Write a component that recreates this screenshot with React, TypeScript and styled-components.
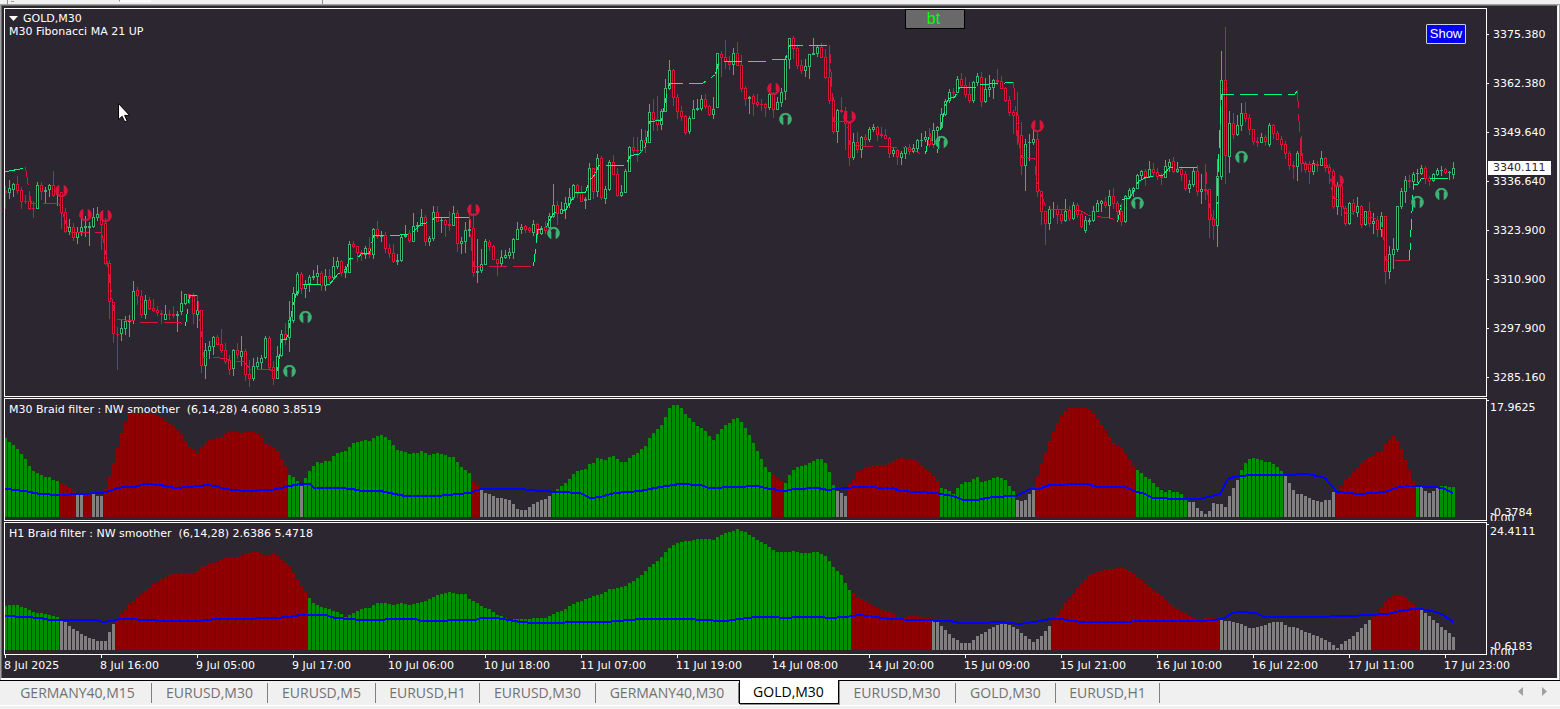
import React from "react";
import styled, { createGlobalStyle } from "styled-components";

const C = {
  bg: "#2c2630",
  chrome: "#f0f0f0",
  line: "#ffffff",
  up: "#3cb371",
  down: "#dc143c",
  maUp: "#00ff7f",
  g: "#009000",
  r: "#900000",
  n: "#808080",
  signal: "#0000ff",
};

/* ---------- data ---------- */

// One candle per entry: direction, high, body top, body bottom, low
const CANDLES = `
r186,191,193,209 g180,188,193,199 g183,184,190,197 r176,184,191,194 r187,190,202,209 r195,201,202,204 r192,201,209,210 r201,208,209,218 g182,185,209,209 r182,185,192,200
g187,190,192,204 g184,185,190,197 r171,185,196,197 g193,194,195,206 r192,192,213,229 r208,212,232,233 g219,227,232,235 r223,227,238,241 g227,232,238,244 g218,227,232,236
g216,226,228,237 g222,226,228,246 g208,217,227,228 g207,214,218,221 r217,218,225,250 r218,223,264,265 r260,263,302,319 r302,302,334,343 r327,334,335,370 g320,328,334,341
g316,321,329,335 g315,320,322,337 g281,291,321,324 r287,290,296,305 r290,296,315,318 g295,300,315,319 r297,300,309,310 r299,308,311,312 r306,310,313,316 r310,313,315,324
g305,314,320,320 r310,314,315,320 r306,314,316,318 g311,314,316,332 g291,303,312,315 g294,294,304,305 r294,294,298,304 r293,296,314,324 g295,310,315,328 r310,310,366,373
g343,350,366,379 g341,346,351,359 g336,337,347,355 r335,337,345,345 r329,344,351,353 r343,350,362,364 r355,360,370,375 g349,350,369,376 r343,350,355,359 g336,351,357,366
r349,351,375,381 r360,374,379,387 g358,366,379,381 g357,362,367,369 g355,358,363,369 g336,338,358,359 r336,338,368,369 r361,367,379,385 g346,356,379,379 g330,334,356,357
r323,334,339,345 g301,320,338,352 g287,293,321,323 g272,274,294,296 r272,274,289,294 g280,284,289,298 g275,277,284,292 g270,276,278,280 g265,273,277,284 r271,273,286,291
g269,276,286,291 r269,276,279,283 g257,266,278,280 g257,261,267,269 r260,261,273,276 g266,269,273,278 g241,244,273,273 r241,244,247,248 r246,246,253,262 r250,252,255,261
g246,248,255,259 r237,248,255,258 g228,229,255,259 r221,229,237,239 g231,235,237,242 r232,235,249,253 r244,248,254,258 r244,253,262,263 g254,260,262,265 g235,237,261,262
g225,235,237,238 r230,233,241,243 g213,226,242,242 g222,225,227,232 g209,217,226,226 r215,217,242,246 g236,238,242,246 g206,212,239,241 r206,212,222,222 g217,220,221,233
r219,220,225,237 r211,224,226,231 g206,213,226,226 r210,213,244,252 g237,241,244,254 g222,230,242,253 g215,229,231,237 r213,228,273,277 g239,271,273,283 g249,264,271,273
g239,241,265,265 r240,242,247,251 r245,246,260,260 r259,259,264,276 g250,257,264,266 g250,255,258,259 g248,252,256,259 g238,239,253,259 g222,229,240,240 g224,227,230,234
r225,226,230,233 r227,228,231,233 g220,224,233,236 r223,224,234,239 g226,228,234,235 r221,227,231,234 g213,216,228,230 g184,205,217,218 r201,205,214,225 g202,209,214,214
g197,203,210,219 g188,197,204,208 g184,185,198,200 r184,185,194,198 r186,193,202,202 g197,199,201,209 g163,168,200,200 r168,168,192,199 g154,158,192,197 r156,158,198,200
g186,189,199,204 g160,162,190,191 r155,162,175,175 r168,174,196,197 g185,192,196,197 g169,171,193,193 g146,147,172,172 r137,147,151,155 r137,150,151,162 g129,140,151,152
r130,140,143,153 g104,112,143,143 r99,112,120,131 r96,119,125,131 g109,111,125,130 g79,88,112,112 g60,70,89,90 r69,70,98,106 r94,97,112,119 r106,111,117,121
r115,116,133,135 g116,118,132,134 g100,109,119,119 g99,108,110,111 g95,99,109,111 r94,99,107,109 r105,106,115,116 g97,109,115,119 g53,53,108,108 r51,54,58,77
r40,57,62,69 r56,62,65,70 g48,53,65,75 r42,53,66,66 r55,65,89,92 r86,88,99,106 g96,97,99,114 r94,96,104,116 r94,102,105,107 r99,104,105,111
r103,104,108,117 g90,94,108,110 r92,94,110,118 g97,102,110,110 g88,92,103,107 g56,59,92,100 g38,38,60,69 r36,38,49,59 r45,48,66,69 r60,65,71,74
g59,66,71,77 g54,54,67,79 g38,53,55,55 g45,47,54,57 r43,47,58,58 r49,57,78,79 r45,77,101,104 r97,100,132,134 g109,110,132,143 r97,110,112,113
r107,111,124,150 r122,123,158,166 g133,142,158,160 r132,142,150,153 g136,137,150,158 r134,137,140,146 g127,129,140,142 g124,127,130,132 r126,127,135,141 r127,134,136,138
r129,135,139,139 r137,138,154,158 g147,150,154,157 r149,150,157,165 g151,153,158,165 g146,147,154,159 r144,147,152,155 g144,148,152,153 g139,140,149,152 g133,140,141,147
g131,137,140,142 r128,138,145,147 g123,130,145,148 g126,127,131,138 g108,114,128,129 g99,101,115,116 g89,92,101,103 r88,92,93,99 g76,79,93,93 r73,79,86,87
r77,85,95,98 r82,94,101,103 g81,82,101,103 g73,76,83,86 r72,77,102,107 g78,89,102,103 g75,87,90,97 g79,80,88,99 r69,80,82,85 r76,81,89,89
r87,88,101,102 r96,100,113,116 r110,112,116,134 r92,115,136,145 r122,135,166,175 g139,144,166,191 g134,142,143,161 g130,139,143,145 r132,139,192,197 r191,191,212,225
r211,211,224,245 g206,209,224,230 g202,209,210,218 r205,209,215,224 r209,214,221,224 g199,211,221,222 r206,210,219,221 g202,205,219,220 r203,205,215,218 r211,214,227,228
g216,220,231,233 g218,220,222,225 g206,211,221,222 g200,203,212,212 g200,201,204,212 r197,202,206,208 g190,196,206,219 r188,196,204,209 r201,203,212,219 r203,211,222,226
g195,196,222,223 g188,190,197,198 g187,188,192,197 g174,175,189,189 g170,171,176,179 r169,171,177,186 g161,169,177,178 r163,169,173,177 r168,172,177,180 r173,176,178,185
g160,166,178,178 g159,162,167,172 r157,161,172,173 g162,169,172,173 r167,169,175,181 r171,174,189,191 g180,184,189,193 g168,171,185,187 r165,171,192,196 g174,189,192,204
r164,189,191,200 r189,189,220,238 r210,219,226,240 g159,176,226,247 g51,80,177,180 r27,80,156,184 g111,123,157,173 r113,123,135,139 g115,125,135,136 g103,113,126,131
r102,113,119,122 r114,118,130,135 r129,129,142,145 r137,141,143,147 g133,137,143,143 r135,137,142,146 g123,125,145,147 r124,125,134,139 r131,133,140,140 r136,139,145,150
r141,144,154,159 r151,153,166,170 r161,165,167,179 g151,153,167,181 r136,153,164,172 r161,163,170,173 r161,164,172,184 g160,163,172,175 r161,164,166,172 g151,158,166,166
r157,158,168,172 r164,167,172,184 r169,171,207,209 g182,186,207,215 r181,186,207,216 r206,208,224,226 g202,203,224,225 r199,203,212,215 g197,206,213,217 r205,206,225,228
g211,211,225,226 r202,211,224,227 g213,221,224,234 r216,220,230,237 g212,216,230,237 r216,216,272,284 g246,254,272,279 g238,249,255,269 g206,206,250,252 g188,191,207,209
g176,180,192,203 r175,180,182,188 g172,174,182,190 g169,173,174,183 g165,168,174,175 r166,168,179,184 r176,178,181,186 g173,174,181,182 g168,170,175,176 g166,170,171,176
r168,169,173,174 g171,172,173,180 g162,168,175,179`;

const MA: Array<["u" | "d", string]> = [
  ["u", "5,171 12,170 16,169 24,168"],
  ["d", "25,167 27,180 29,193 31,203 58,203 61,208 66,225 70,232 101,232 104,245 108,270 112,302 115,319 134,320 136,322 180,322 184,326"],
  ["u", "185,326 187,310 189,295 197,295"],
  ["d", "197,295 200,325 203,357 212,357 226,358 230,361 243,361 250,369 268,369 276,371"],
  ["u", "277,371 279,355 281,339 286,339 289,325 292,308 295,295 301,284 329,284 338,273 345,272 349,258 357,258 361,253 369,253 373,235 389,235 410,234 413,231 421,223 430,222 434,217 469,217"],
  ["d", "469,210 471,245 473,266 534,266"],
  ["u", "533,266 535,250 537,229 545,229 549,219 554,212 565,210 571,200 575,192 585,192 588,182 595,173 598,165 625,165 630,155 638,154 645,146 649,121 661,120 665,100 669,83 702,83 709,78 715,74 718,62 728,61 766,61 770,59 785,59 789,45 829,45"],
  ["d", "829,45 831,80 833,121 847,121 849,145 873,146 905,147 920,153"],
  ["u", "925,154 928,137"],
  ["d", "929,130 933,147 936,153"],
  ["u", "937,153 939,136 941,124 945,105 948,98 954,97 959,87 975,87 977,84 1001,83 1008,82 1013,82"],
  ["d", "1013,82 1015,105 1018,140 1021,157 1034,158 1036,180 1040,192 1045,206 1048,209 1066,209 1080,210 1088,215 1112,218 1117,222"],
  ["u", "1117,222 1120,207 1121,199 1129,198 1138,181 1145,177 1162,175 1169,167 1198,167 1202,166"],
  ["d", "1205,166 1208,200 1212,219 1216,219"],
  ["u", "1216,219 1218,160 1221,94 1294,94 1297,90"],
  ["d", "1297,90 1299,130 1301,160 1304,164 1327,165 1333,198 1340,199 1345,213 1361,214 1363,217 1373,217 1381,222 1385,260 1409,260"],
  ["u", "1409,260 1411,220 1413,184 1417,184 1421,178 1448,178"],
];

const DOWN_MARKS = [[61, 191], [85, 215], [105, 216], [473, 210], [773, 89], [849, 117], [1037, 126], [1337, 181]];
const UP_MARKS = [[289, 371], [305, 317], [553, 233], [785, 119], [941, 142], [1137, 203], [1241, 157], [1417, 202], [1441, 194]];

// Histogram runs: colour key, then the top of each bar
const M30_BARS = `
g438,442,445,449,454,459,466,471,473,475,477,477,480,481
r483,485,488,491 n494,494 r494,494 n494,496,496
r489,477,463,447,433,422,414,414,413,413,413,413,414,416,418,421,424,426,430,434,441,447,450,453,447,443,440,440,438,437,434,431,431,432,433,432,431,432,434,437,444,446,447,451,459,466
g475,477,481 n486
g478,471,466,462,463,461,461,456,453,452,451,447,443,442,441,440,441,438,436,435,437,440,445,450,451,452,454,453,453,451,453,455,454,453,454,455,457,457,462,467,470,473
r482,485 n490,493,494,496,498,498,499,500,504,509,510,510,507,504,502,500,499,496
g493,489,486,483,479,474,471,470,469,464,463,458,459,460,457,456,459,462,462,458,455,453,449,446,438,433,429,425,417,408,405,405,408,414,418,422,426,428,431,436,440,434,429,425,423,419,418,422,428,435,443,451,459,467,472
r475,478,481
g483,475,470,467,466,465,463,461,459,459,463,472,485 n491,493,496
r484,479,472,470,468,467,466,465,465,465,463,461,459,458,459,459,460,462,465,469,471,476,481
g488,489,491,494,488,484,482,482,479,477,482,481,480,478,477,478,480,486,491 n500,501,500,494,490
r476,464,453,441,431,423,415,411,408,408,408,407,408,410,413,419,425,430,437,443,446,448,454,460,466
g470,473,477,479,483,487,490,492,490,492,492,494,499 n502,502,508,511,514,511,503,504,504,507,496,488,480
g470,463,459,458,459,460,462,462,464,467,471 n476,483,490,494,494,496,498,500,501,502,500,500,492
r493,486,480,477,472,468,463,460,457,455,452,452,444,439,436,441,449,460,470,481
g485 n487,491,493,491,488 g486,486,487,487`;

const H1_BARS = `
g606,605,605,605,607,608,610,612,613,613,614,615,616,617 n620,622,626,629,631,634,636,638,639,641,641,641,632,624
r619,613,609,604,601,598,594,591,588,584,582,579,577,575,574,573,573,574,574,574,571,567,566,564,563,562,560,558,558,558,557,556,554,553,552,552,554,555,555,554,556,559,563,566,573,580,586,592
g598,603,605,607,608,609,611,612,614,617,615,613,611,609,608,608,605,603,603,603,604,605,604,603,604,605,604,603,602,601,599,597,595,594,593,592,593,594,594,594,599,601,603,606,608,609,612,615,616,618,619,619,619,619,619,619,618,618,618,618,616,614,612,611,609,606,604,602,601,599,598,596,595,594,592,589,589,588,587,586,583,581,578,575,571,567,564,561,557,552,548,545,543,542,541,541,540,539,539,539,539,540,537,535,533,532,531,529,531,532,535,537,540,542,544,547,550,552,552,552,552,551,552,553,553,553,552,552,554,556,561,567,571,575,583,590
r593,597,599,602,604,606,608,609,611,612,614,617,618,617,616,616,616,617,617,618
n621,622,626,630,634,638,640,643,643,643,640,636,634,632,629,627,625,624,624,625,627,629,633,636,639,642,639,636,631,626
r620,615,609,603,598,594,588,583,579,575,574,572,571,570,569,569,568,567,569,571,574,577,580,583,587,590,593,596,600,604,607,610,612,613,616,618,619,619,618,617,618,619
n620,621,621,622,623,624,626,628,628,627,626,625,623,622,622,622,625,627,627,628,630,632,633,635,636,638,640,642,645,648,644,641,639,636,632,628,624,620
r617,614,607,602,598,595,595,596,598,601,604,608 n610,613,616,620,623,627,630,633,637`;

const M30_SIGNAL =
  "5,489 17,490 30,492 40,494 60,495 80,494 100,493 107,492 115,489 123,487 135,487 145,484 160,485 175,488 190,487 207,485 215,486 225,489 245,491 272,490 285,487 300,484 310,484 314,488 340,488 352,489 362,491 380,491 390,493 405,496 437,496 447,495 470,493 480,489 520,489 540,491 560,492 580,493 590,498 600,497 615,493 640,491 660,487 680,484 700,485 710,488 735,487 757,486 765,488 778,490 784,491 795,489 818,488 828,490 845,488 860,487 893,488 900,491 935,493 953,496 963,500 976,500 993,497 1016,496 1030,489 1038,489 1050,485 1087,484 1098,487 1125,487 1137,492 1145,494 1153,498 1180,499 1200,499 1220,494 1228,479 1234,477 1250,475 1285,475 1308,474 1325,478 1337,492 1360,494 1385,492 1395,488 1408,486 1436,487 1445,489 1453,493";
const H1_SIGNAL =
  "5,616 25,617 40,618 50,620 95,620 103,622 112,621 120,619 133,619 143,620 170,621 200,621 215,619 240,619 272,618 290,617 300,615 325,615 335,618 350,619 360,620 380,620 390,619 415,619 422,621 475,620 482,618 495,618 510,620 520,622 535,623 560,623 570,622 605,622 630,620 640,619 690,619 700,620 725,621 740,619 755,617 775,617 785,618 800,617 820,617 830,618 845,617 860,615 875,617 890,619 915,620 950,621 960,623 980,623 1000,622 1020,624 1040,621 1050,619 1062,619 1070,621 1085,622 1125,622 1140,621 1200,621 1215,620 1225,618 1232,613 1240,612 1256,613 1264,617 1310,617 1350,616 1388,614 1400,611 1412,609 1422,609 1435,612 1442,614 1453,622";

const PRICES = ["3375.380", "3362.380", "3349.640", "3336.640", "3323.900", "3310.900", "3297.900", "3285.160"];
const TIMES = ["8 Jul 2025", "8 Jul 16:00", "9 Jul 05:00", "9 Jul 17:00", "10 Jul 06:00", "10 Jul 18:00", "11 Jul 07:00", "11 Jul 19:00", "14 Jul 08:00", "14 Jul 20:00", "15 Jul 09:00", "15 Jul 21:00", "16 Jul 10:00", "16 Jul 22:00", "17 Jul 11:00", "17 Jul 23:00"];
const TABS: Array<[string, number]> = [
  ["GERMANY40,M15", 148],
  ["EURUSD,M30", 116],
  ["EURUSD,M5", 108],
  ["EURUSD,H1", 104],
  ["EURUSD,M30", 116],
  ["GERMANY40,M30", 143],
  ["GOLD,M30", 100],
  ["EURUSD,M30", 117],
  ["GOLD,M30", 100],
  ["EURUSD,H1", 104],
];
const ACTIVE_TAB = 6;

/* ---------- drawing helpers ---------- */

const STEP = 4;
const X0 = 5;

const box = (x: number, y: number, w: number, h: number) => `M${x} ${y}h${w}v${h}h${-w}z`;

function candlePaths() {
  const out = { g: "", r: "", core: "" };
  CANDLES.trim().split(/\s+/).forEach((item, i) => {
    const side = item[0] as "g" | "r";
    const [high, top, bottom, low] = item.slice(1).split(",").map(Number);
    const x = X0 + i * STEP;
    const h = Math.max(1, bottom - top);
    if (top > high) out[side] += box(x, high, 1, top - high);
    if (low > top + h) out[side] += box(x, top + h, 1, low - top - h);
    out[side] += box(x - 1, top, 3, h);
    if (h > 2) out.core += box(x, top + 1, 1, h - 2);
  });
  return out;
}

function barPaths(source: string, base: number) {
  const out = { g: "", r: "", n: "" };
  let i = 0;
  source.trim().split(/\s+/).forEach((run) => {
    const side = run[0] as "g" | "r" | "n";
    run.slice(1).split(",").forEach((top) => {
      out[side] += box(X0 + i * STEP - 1, Number(top), 3, base - Number(top));
      i += 1;
    });
  });
  return out;
}

/* ---------- styles ---------- */

const Global = createGlobalStyle`
  * { box-sizing: border-box; }
  body { margin: 0; background: ${C.chrome}; }
`;

const Page = styled.div`
  min-height: 100vh;
  display: flex;
  flex-direction: column;
  background: ${C.chrome};
  overflow: hidden;
  font: 11px/14px "DejaVu Sans", Verdana, sans-serif;
`;

const Toolbar = styled.header`
  height: 4px;
  display: flex;
  overflow: hidden;
`;

const Rule = styled.i<{ $before: number }>`
  width: 1px;
  margin-left: ${(p) => p.$before}px;
  background: #8c8c8c;
`;

const Grip = styled.i`
  width: 3px;
  height: 1px;
  margin: 1px 0 0 3px;
  background: #9a9a9a;
`;

const Inset = styled.i`
  width: 32px;
  height: 2px;
  margin-left: 105px;
  border: solid #fff;
  border-width: 0 1px 1px 0;
  border-left: 1px solid #8c8c8c;
  background: #f8f8f8;
`;

const Frame = styled.main`
  border: solid #a0a0a0;
  border-width: 1px 1px 0 1px;
  background: #fff;
  padding: 0 1px 2px 0;
`;

const Window = styled.div`
  border: solid #696969;
  border-width: 1px 1px 0 1px;
  border-right-color: ${C.chrome};
  background: ${C.bg};
  color: ${C.line};
  padding: 2px 0 0 2px;
  display: grid;
  grid-template-columns: minmax(0, 1fr) 70px;
  grid-template-rows: 389px 123px 133px 22px;
  row-gap: 1px;
`;

const Pane = styled.section`
  position: relative;
  border: 1px solid ${C.line};
  overflow: hidden;
`;

const Plot = styled.svg`
  display: block;
  width: 100%;
  height: 100%;
`;

const Caption = styled.div`
  position: absolute;
  top: 3px;
  left: 4px;
  white-space: pre;
  line-height: 13px;
`;

const IndicatorCaption = styled(Caption)`
  top: 4px;
`;

const Symbol = styled.div`
  display: flex;
  align-items: center;
  gap: 5px;
`;

const Arrow = styled.svg`
  width: 9px;
  height: 5px;
`;

const BtButton = styled.button`
  position: absolute;
  top: 0;
  left: 900px;
  width: 60px;
  height: 20px;
  padding: 0 3px 0 0;
  border: 1px solid #000;
  background: #696969;
  color: #00ff00;
  font: 16px/18px "Liberation Sans", Arial, sans-serif;
`;

const ShowButton = styled.button`
  position: absolute;
  top: 15px;
  right: 20px;
  width: 40px;
  height: 20px;
  padding: 0;
  border: 1px solid #d0d0e0;
  border-radius: 1px;
  background: #0000f0;
  color: #fff;
  font: 13px/18px "Liberation Sans", Arial, sans-serif;
`;

const Cursor = styled.svg`
  position: absolute;
  left: 112px;
  top: 93px;
  width: 14px;
  height: 21px;
`;

const Axis = styled.div`
  position: relative;
  overflow: hidden;
`;

const PriceList = styled.ul`
  list-style: none;
  margin: 0;
  padding: 2px 0 0;
`;

const Price = styled.li`
  height: 49px;
  display: flex;
  align-items: center;
  gap: 4px;

  &::before {
    content: "";
    width: 2px;
    height: 1px;
    background: ${C.line};
  }
`;

const LastPrice = styled.output`
  position: absolute;
  top: 153px;
  left: 1px;
  width: 63px;
  height: 14px;
  padding-left: 5px;
  background: #fff;
  color: ${C.bg};
`;

const Scale = styled(Axis)`
  padding: 3px 0 0 3px;

  &::before {
    content: "";
    position: absolute;
    top: 2px;
    left: 0;
    width: 2px;
    height: 1px;
    background: ${C.line};
  }
`;

const Floor = styled.span<{ $bottom: number }>`
  position: absolute;
  left: 3px;
  bottom: ${(p) => p.$bottom}px;
`;

const TimeAxis = styled.ol`
  grid-column: 1 / -1;
  display: flex;
  list-style: none;
  margin: -1px 0 0;
  padding: 0;
  overflow: hidden;
`;

const Time = styled.li`
  flex: 0 0 96px;
  white-space: nowrap;
  line-height: 16px;

  &::before {
    content: "";
    display: block;
    width: 1px;
    height: 3px;
    margin-left: 1px;
    background: ${C.line};
  }
`;

const TabBar = styled.nav`
  display: flex;
  height: 26px;
  padding: 0 4px;
  border-bottom: 1px solid #fff;
  box-shadow: inset 0 1px 0 #000;
  font: 14px/18px "Open Sans", "Noto Sans", sans-serif;
`;

const Tab = styled.button<{ $w: number; $active: boolean }>`
  flex: 0 0 ${(p) => p.$w}px;
  height: ${(p) => (p.$active ? 24 : 25)}px;
  padding: 0 1px 0 0;
  border: 0;
  font: inherit;
  white-space: nowrap;
  color: ${(p) => (p.$active ? "#000" : "#707070")};
  background: ${(p) =>
    p.$active ? "#fff" : "linear-gradient(#808080, #808080) right 3px / 1px 20px no-repeat"};
  ${(p) => p.$active && "border: solid #000; border-width: 0 1px 1px 1px; box-shadow: 1px 1px 0 #909090;"}
`;

const Spacer = styled.div`
  flex: 1;
`;

const Scroller = styled.button`
  width: 24px;
  height: 22px;
  padding: 0;
  border: 0;
  background: none;
  display: grid;
  place-items: center;
`;

/* ---------- parts ---------- */

const Marker = ({ x, y, up }: { x: number; y: number; up?: boolean }) => (
  <g transform={`translate(${x + 0.5} ${y}) scale(1 ${up ? 1 : -1})`} fill={up ? C.up : C.down}>
    <path d="M-2 6.2 A6.4 6.4 0 1 1 2 6.2 L2 -1.2 L4 -1.2 L0 -4.6 L-4 -1.2 L-2 -1.2 Z" opacity="0.55" />
    <path d="M-2.4 5.9 A6.2 6.2 0 1 1 2.4 5.9 L2.4 -2 L3.6 -2.4 Q0 -6.4 -3.6 -2.4 L-2.4 -2 Z" />
  </g>
);

function PriceChart() {
  const c = candlePaths();
  return (
    <Plot role="img" aria-label="GOLD M30 candles">
      <g transform="translate(-5 -9)">
        <g shapeRendering="crispEdges">
          <path d={c.g} fill={C.up} />
          <path d={c.r} fill={C.down} />
          <path d={c.core} fill="#000" />
          {MA.map(([dir, points], i) => (
            <polyline
              key={i}
              points={points}
              transform="translate(0.5 0.5)"
              fill="none"
              stroke={dir === "u" ? C.maUp : C.down}
              strokeDasharray="18 6"
            />
          ))}
        </g>
        {DOWN_MARKS.map(([x, y]) => <Marker key={x} x={x} y={y} />)}
        {UP_MARKS.map(([x, y]) => <Marker key={x} x={x} y={y} up />)}
      </g>
    </Plot>
  );
}

function Histogram({ bars, signal, top, base, label }: { bars: string; signal: string; top: number; base: number; label: string }) {
  const b = barPaths(bars, base);
  return (
    <Plot role="img" aria-label={label}>
      <g transform={`translate(-5 ${-top})`} shapeRendering="crispEdges">
        <path d={b.g} fill={C.g} />
        <path d={b.r} fill={C.r} />
        <path d={b.n} fill={C.n} />
        <polyline points={signal} fill="none" stroke={C.signal} strokeWidth="2" />
      </g>
    </Plot>
  );
}

export default function App() {
  return (
    <Page>
      <Global />
      <Toolbar>
        <Rule $before={7} />
        <Grip />
        <Inset />
        <Rule $before={171} />
      </Toolbar>
      <Frame>
        <Window>
          <Pane>
            <PriceChart />
            <Caption>
              <Symbol>
                <Arrow viewBox="0 0 9 5"><path d="M0 0h9L4.500 5z" fill="#fff" /></Arrow>
                GOLD,M30
              </Symbol>
              M30 Fibonacci MA 21 UP
            </Caption>
            <BtButton type="button">bt</BtButton>
            <ShowButton type="button">Show</ShowButton>
            <Cursor viewBox="0 0 14 21">
              <path d="M1.500 1.500v16.200l3.600-3.400 2.700 5.600 2.400-1-2.600-5.500h5z" fill="#fff" stroke="#000" />
            </Cursor>
          </Pane>
          <Axis>
            <PriceList>
              {PRICES.map((p) => <Price key={p}>{p}</Price>)}
            </PriceList>
            <LastPrice>3340.111</LastPrice>
          </Axis>

          <Pane>
            <Histogram bars={M30_BARS} signal={M30_SIGNAL} top={399} base={517} label="M30 Braid filter" />
            <IndicatorCaption>{"M30 Braid filter : NW smoother  (6,14,28) 4.6080 3.8519"}</IndicatorCaption>
          </Pane>
          <Scale>
            17.9625
            <Floor $bottom={1}>-0.3784</Floor>
            <Floor $bottom={-5}>0.00</Floor>
          </Scale>

          <Pane>
            <Histogram bars={H1_BARS} signal={H1_SIGNAL} top={523} base={650} label="H1 Braid filter" />
            <IndicatorCaption>{"H1 Braid filter : NW smoother  (6,14,28) 2.6386 5.4718"}</IndicatorCaption>
          </Pane>
          <Scale>
            24.4111
            <Floor $bottom={1}>-0.6183</Floor>
            <Floor $bottom={-5}>0.00</Floor>
          </Scale>

          <TimeAxis>
            {TIMES.map((t) => <Time key={t}>{t}</Time>)}
          </TimeAxis>
        </Window>
      </Frame>
      <TabBar>
        {TABS.map(([name, w], i) => (
          <Tab key={i} type="button" $w={w} $active={i === ACTIVE_TAB}>{name}</Tab>
        ))}
        <Spacer />
        <Scroller type="button" aria-label="Scroll tabs left">
          <svg width="5" height="9" viewBox="0 0 5 9"><path d="M5 0v9L0 4.500z" fill="#a0a0a0" /></svg>
        </Scroller>
        <Scroller type="button" aria-label="Scroll tabs right">
          <svg width="5" height="9" viewBox="0 0 5 9"><path d="M0 0v9l5-4.500z" fill="#a0a0a0" /></svg>
        </Scroller>
      </TabBar>
    </Page>
  );
}
